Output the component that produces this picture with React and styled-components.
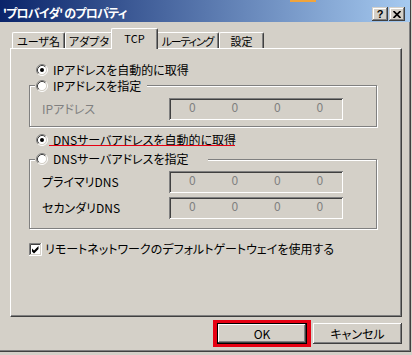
import React from "react";
import styled, { createGlobalStyle } from "styled-components";

const FACE = "#d4d0c8";
const FONT = `"Noto Sans CJK JP", "Noto Sans", sans-serif`;

const Global = createGlobalStyle`
  html, body { margin: 0; padding: 0; background: ${FACE}; }
  body { font-family: ${FONT}; font-size: 12px; }
`;

const Window = styled.div`
  position: relative;
  width: 411px;
  height: 352px;
  box-sizing: border-box;
  display: flex;
  flex-direction: column;
  background: ${FACE};
  border-right: 1px solid #404040;
  border-bottom: 1px solid #404040;
  box-shadow: inset -1px -1px 0 #808080;
  font-family: ${FONT};
  font-feature-settings: "palt";
  font-size: 12px;
  color: #000;
`;

// strip of some other window peeking over the title bar
const Peek = styled.div`
  position: absolute;
  top: 0;
  left: 290px;
  width: 26px;
  height: 2px;
  background: #f0a43c;
`;

const TitleBar = styled.div`
  height: 22px;
  box-sizing: border-box;
  display: flex;
  align-items: flex-start;
  padding: 0 5px 0 3px;
  background: linear-gradient(to right, #0a246a, #a6caf0);
`;

const TitleText = styled.div`
  flex: 1;
  padding-top: 5px;
  line-height: 16px;
  color: #fff;
  font-weight: bold;
  letter-spacing: -0.8px;
  white-space: nowrap;
`;

const CaptionButtons = styled.div`
  display: flex;
  gap: 1px;
  margin-top: 7px;
`;

const CaptionButton = styled.div`
  width: 16px;
  height: 14px;
  box-sizing: border-box;
  display: flex;
  align-items: center;
  justify-content: center;
  background: ${FACE};
  box-shadow: inset -1px -1px 0 #404040, inset 1px 1px 0 ${FACE},
    inset -2px -2px 0 #808080, inset 2px 2px 0 #fff;
  font-family: "Liberation Sans", Arial, sans-serif;
  font-weight: bold;
  font-size: 11px;
  line-height: 12px;
  color: #000;
`;

const Body = styled.div`
  flex: 1;
  display: flex;
  flex-direction: column;
  padding: 6px 8px 0 10px;
`;

const TabRow = styled.div`
  display: flex;
  align-items: flex-end;
  height: 20px;
  margin-left: 2px;
`;

const Tab = styled.div`
  position: relative;
  flex: none;
  width: ${(p) => (p.$active ? p.$w + 4 : p.$w)}px;
  height: ${(p) => (p.$active ? 21 : 16)}px;
  margin: ${(p) => (p.$active ? "0 -2px -1px" : "0")};
  z-index: ${(p) => (p.$active ? 2 : 1)};
  box-sizing: border-box;
  display: flex;
  align-items: center;
  justify-content: center;
  padding-bottom: ${(p) => (p.$active ? 3 : 0)}px;
  background: ${FACE};
  border-top: 1px solid #fff;
  border-left: 1px solid #fff;
  border-right: 1px solid #404040;
  border-radius: 2px 2px 0 0;
  box-shadow: inset -1px 0 0 #808080;
  font-size: 11px;
  line-height: 14px;
  letter-spacing: ${(p) => p.$ls || 0}px;
  white-space: nowrap;
`;

const Panel = styled.div`
  height: 269px;
  box-sizing: border-box;
  display: flex;
  flex-direction: column;
  align-items: flex-start;
  padding: 13px 0 0 18px;
  border-top: 1px solid #fff;
  border-left: 1px solid #fff;
  border-right: 1px solid #404040;
  border-bottom: 1px solid #404040;
  box-shadow: inset -1px -1px 0 #808080;
`;

const OptionRow = styled.div`
  position: relative;
  display: flex;
  align-items: center;
  gap: 5px;
  height: 16px;
  margin: ${(p) => p.$top || 0}px 0 0 7px;
  line-height: 16px;
  white-space: nowrap;
`;

const Underline = styled.div`
  position: absolute;
  left: 13px;
  top: 13px;
  width: 186px;
  height: 1px;
  background: #e60012;
`;

const Group = styled.div`
  display: flex;
  flex-direction: column;
  align-items: flex-start;
  width: 348px;
  box-sizing: border-box;
  margin-top: ${(p) => p.$top}px;
  padding-bottom: ${(p) => p.$bottom}px;
  border: 1px solid #808080;
  box-shadow: 1px 1px 0 #fff, inset 1px 1px 0 #fff;
`;

const Legend = styled.div`
  display: flex;
  align-items: center;
  gap: 5px;
  width: ${(p) => p.$w}px;
  height: 16px;
  box-sizing: border-box;
  margin: ${(p) => p.$lift}px 0 0 5px;
  padding-left: 1px;
  background: ${FACE};
  line-height: 16px;
  white-space: nowrap;
`;

const FieldRow = styled.div`
  display: flex;
  align-items: center;
  margin-top: 4px;
  padding-left: 12px;
`;

const Label = styled.span`
  width: 127px;
  line-height: 16px;
  color: ${(p) => (p.$disabled ? "#808080" : "#000")};
  white-space: nowrap;
`;

const IpField = styled.div`
  width: 174px;
  height: 22px;
  box-sizing: border-box;
  display: grid;
  grid-template-columns: repeat(4, 1fr);
  padding: 1px 2px 3px;
  background: ${FACE};
  box-shadow: inset 1px 1px 0 #808080, inset -1px -1px 0 #fff,
    inset 2px 2px 0 #404040, inset -2px -2px 0 ${FACE};
`;

const Octet = styled.span`
  text-align: center;
  line-height: 16px;
  color: #808080;
`;

const CheckRow = styled.div`
  display: flex;
  align-items: center;
  gap: 3px;
  height: 16px;
  margin-top: 12px;
  line-height: 16px;
  white-space: nowrap;
`;

const Footer = styled.div`
  display: flex;
  justify-content: flex-end;
  align-items: center;
  gap: 2px;
  margin-top: 3px;
`;

const RedFrame = styled.div`
  display: flex;
  border: solid #e60012;
  border-width: 3px 4px;
`;

const Button = styled.button`
  width: ${(p) => (p.$default ? 90 : 89)}px;
  height: 21px;
  box-sizing: border-box;
  margin: 0;
  padding: 0;
  background: ${FACE};
  border: ${(p) => (p.$default ? "1px solid #000" : "none")};
  box-shadow: inset -1px -1px 0 #404040, inset 1px 1px 0 #fff,
    inset -2px -2px 0 #808080;
  font-family: ${FONT};
  font-feature-settings: "palt";
  font-size: 12px;
  line-height: 16px;
  color: #000;
`;

const Glyph = styled.svg`
  display: block;
  flex: none;
`;

function Radio({ checked }) {
  return (
    <Glyph width="12" height="12" viewBox="0 0 12 12">
      <circle cx="6" cy="6" r="4.5" fill="#fff" />
      <path d="M2.11 9.89A5.5 5.5 0 0 1 9.89 2.11" stroke="#808080" fill="none" />
      <path d="M9.89 2.11A5.5 5.5 0 0 1 2.11 9.89" stroke="#fff" fill="none" />
      <path d="M2.82 9.18A4.5 4.5 0 0 1 9.18 2.82" stroke="#404040" fill="none" />
      <path d="M9.18 2.82A4.5 4.5 0 0 1 2.82 9.18" stroke={FACE} fill="none" />
      {checked && <circle cx="6" cy="6" r="2" fill="#000" />}
    </Glyph>
  );
}

function Checkbox() {
  return (
    <Glyph width="13" height="13" viewBox="0 0 13 13">
      <rect x="2" y="2" width="9" height="9" fill="#fff" />
      <path d="M0.5 12V0.5H12" stroke="#808080" fill="none" />
      <path d="M1.5 11V1.5H11" stroke="#404040" fill="none" />
      <path d="M0 12.5H12.5V0" stroke="#fff" fill="none" />
      <path d="M1 11.5H11.5V1" stroke={FACE} fill="none" />
      <path d="M3 5.5L5 7.5L9.5 3V6L5 10.5L3 8.5Z" fill="#000" />
    </Glyph>
  );
}

function CloseGlyph() {
  return (
    <Glyph width="8" height="7" viewBox="0 0 8 7">
      <path d="M0.5 0L7.5 7M7.5 0L0.5 7" stroke="#000" strokeWidth="1.7" />
    </Glyph>
  );
}

function Ip() {
  return (
    <IpField>
      {[0, 1, 2, 3].map((i) => (
        <Octet key={i}>0</Octet>
      ))}
    </IpField>
  );
}

const tabs = [
  { label: "ユーザ名", w: 53 },
  { label: "アダプタ", w: 48 },
  { label: "TCP", w: 43, active: true },
  { label: "ルーティング", w: 63, ls: -1.2 },
  { label: "設定", w: 45 },
];

export default function App() {
  return (
    <>
      <Global />
      <Window>
        <Peek />
        <TitleBar>
          <TitleText>'プロバイダ' のプロパティ</TitleText>
          <CaptionButtons>
            <CaptionButton>?</CaptionButton>
            <CaptionButton>
              <CloseGlyph />
            </CaptionButton>
          </CaptionButtons>
        </TitleBar>
        <Body>
          <TabRow>
            {tabs.map((t) => (
              <Tab key={t.label} $w={t.w} $active={t.active} $ls={t.ls}>
                {t.label}
              </Tab>
            ))}
          </TabRow>
          <Panel>
            <OptionRow>
              <Radio checked />
              IPアドレスを自動的に取得
            </OptionRow>
            <Group $top={7} $bottom={6}>
              <Legend $w={112} $lift={-8}>
                <Radio />
                IPアドレスを指定
              </Legend>
              <FieldRow>
                <Label $disabled>IPアドレス</Label>
                <Ip />
              </FieldRow>
            </Group>
            <OptionRow $top={5}>
              <Radio checked />
              DNSサーバアドレスを自動的に取得
              <Underline />
            </OptionRow>
            <Group $top={11} $bottom={9}>
              <Legend $w={173} $lift={-9}>
                <Radio />
                DNSサーバアドレスを指定
              </Legend>
              <FieldRow>
                <Label>プライマリDNS</Label>
                <Ip />
              </FieldRow>
              <FieldRow>
                <Label>セカンダリDNS</Label>
                <Ip />
              </FieldRow>
            </Group>
            <CheckRow>
              <Checkbox />
              リモートネットワークのデフォルトゲートウェイを使用する
            </CheckRow>
          </Panel>
          <Footer>
            <RedFrame>
              <Button $default>OK</Button>
            </RedFrame>
            <Button>キャンセル</Button>
          </Footer>
        </Body>
      </Window>
    </>
  );
}
